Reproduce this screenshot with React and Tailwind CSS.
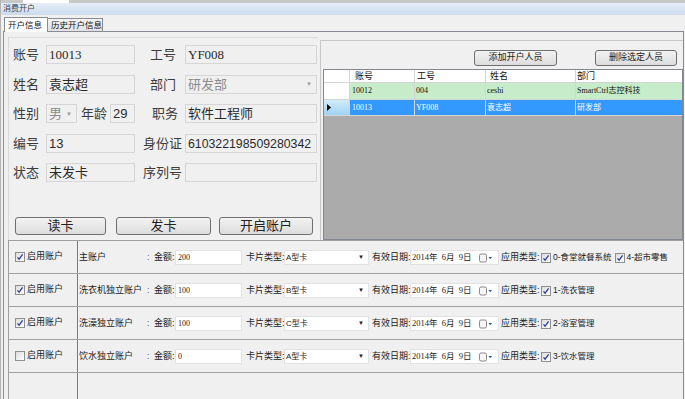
import React from 'react'

const SANS = "font-['Liberation_Sans','Noto_Sans_CJK_SC',sans-serif]"
const SERIF = "font-['Liberation_Serif','Noto_Sans_CJK_SC',serif]"

function Check({ on }) {
  return (
    <span className="w-[10px] h-[10px] shrink-0 border border-[#8e8f8f] bg-gradient-to-br from-[#dcdcdc] to-white flex items-center justify-center">
      {on && (
        <svg width="8" height="8" viewBox="0 0 8 8">
          <path d="M1.5 4.3 L3.1 6.2 L6.6 1.4" fill="none" stroke="#2c3f9a" strokeWidth="1.3" />
        </svg>
      )}
    </span>
  )
}

// 左侧只读输入框
function Box({ className = '', children, arrow, muted }) {
  return (
    <div className={`h-[19px] shrink-0 border border-[#d6d6d6] bg-[#f0f0f0] flex items-center pl-[2px] text-[13px] leading-none overflow-hidden ${muted ? 'text-[#8c8c8c]' : 'text-[#2a2a2a]'} ${className}`}>
      <span className="flex-1 whitespace-nowrap">{children}</span>
      {arrow && <span className="text-[6px] text-[#9a9a9a] pr-[4px]">▼</span>}
    </div>
  )
}

function Label({ className = '', children }) {
  return <span className={`shrink-0 text-[13px] text-[#3c3c3c] whitespace-nowrap ${className}`}>{children}</span>
}

function Btn({ className = '', children }) {
  return (
    <button className={`shrink-0 border border-[#707070] rounded-[3px] bg-gradient-to-b from-[#f3f3f3] to-[#dcdcdc] flex items-center justify-center text-[#222] ${className}`}>
      {children}
    </button>
  )
}

const accounts = [
  { on: true, name: '主账户', amount: '200', card: 'A型卡', apps: ['0-食堂就餐系统', '4-超市零售'] },
  { on: true, name: '洗衣机独立账户', amount: '100', card: 'B型卡', apps: ['1-洗衣管理'] },
  { on: true, name: '洗澡独立账户', amount: '100', card: 'C型卡', apps: ['2-浴室管理'] },
  { on: false, name: '饮水独立账户', amount: '0', card: 'A型卡', apps: ['3-饮水管理'] },
]

function AccountRow({ on, name, amount, card, apps }) {
  return (
    <div className="h-[33px] shrink-0 flex border-b border-[#a0a0a0] text-[9px] text-[#222]">
      <div className="w-[69px] shrink-0 border-r border-[#7a7a7a] flex items-center gap-[2px] pl-[6px]">
        <Check on={on} />
        <span>启用账户</span>
      </div>
      <div className="flex-1 flex items-center h-[15px] mt-[9px]">
        <span className="w-[69px] pl-[1px] whitespace-nowrap">{name}</span>
        <span className="w-[7px] text-[#666]">:</span>
        <span className="w-[21px] whitespace-nowrap">金额:</span>
        <div className="w-[67px] h-[15px] bg-white border border-[#e2e2e2] flex items-center pl-[2px]">
          <span className={`${SERIF} text-[8px]`}>{amount}</span>
        </div>
        <span className="w-[38px] ml-[4px] whitespace-nowrap">卡片类型:</span>
        <div className="w-[85px] h-[15px] bg-white border border-[#e2e2e2] flex items-center pl-[1px]">
          <span className="flex-1 text-[8px]">{card}</span>
          <span className="text-[6px] pr-[4px]">▼</span>
        </div>
        <span className="w-[38px] ml-[3px] whitespace-nowrap">有效日期:</span>
        <div className="w-[89px] h-[15px] bg-white border border-[#e2e2e2] flex items-center pl-[1px]">
          <span className={`flex-1 ${SERIF} text-[8.5px] whitespace-pre`}>2014年  6月  9日</span>
          <svg width="14" height="10" viewBox="0 0 14 10" className="mr-[5px]">
            <rect x="0.5" y="1" width="7" height="8" rx="1.5" fill="#f6f6f6" stroke="#8a8a8a" />
            <path d="M9.5 4 L13 4 L11.25 6.2 Z" fill="#2c5aa0" />
          </svg>
        </div>
        <span className="w-[40px] ml-[2px] whitespace-nowrap">应用类型:</span>
        {apps.map((a) => (
          <span key={a} className="flex items-center gap-[2px] mr-[3px] whitespace-nowrap text-[8.5px]">
            <Check on />
            <span>{a}</span>
          </span>
        ))}
      </div>
    </div>
  )
}

export default function App() {
  return (
    <div className={`w-[685px] h-[399px] overflow-hidden bg-[#f0f0f0] flex flex-col border-l border-[#b4b4b4] ${SANS}`}>
      {/* 上方父窗体残留 */}
      <div className="h-[3px] shrink-0 flex bg-[#c8c8c8]">
        <div className="w-[22px]" />
        <div className="w-[46px] bg-white" />
      </div>
      {/* 标题 */}
      <div className="h-[12px] shrink-0 bg-gradient-to-b from-[#e6eef8] to-[#cddbec] pl-[2px] text-[8px] leading-[12px] text-[#444]">
        消费开户
      </div>
      {/* 页签 */}
      <div className="h-[16px] shrink-0 flex items-end pl-[3px]">
        <div className="w-[44px] h-[15px] bg-white border border-b-0 border-[#898c95] text-[8.5px] text-[#111] flex items-center pl-[3px] -mb-px relative z-10">
          开户信息
        </div>
        <div className="w-[55px] h-[13px] bg-gradient-to-b from-[#f3f3f3] to-[#e2e2e2] border border-b-0 border-l-0 border-[#898c95] text-[8.5px] text-[#111] flex items-center pl-[3px]">
          历史开户信息
        </div>
      </div>
      {/* 页签内容 */}
      <div className="ml-[2px] w-[681px] flex-1 flex flex-col border-t border-l border-r border-[#898c95] bg-[#f0f0f0]">
        <div className="h-[208px] shrink-0 flex pl-[4px]">
          {/* 人员信息 */}
          <div className="w-[310px] mt-[5px] border-l border-t border-[#dadada] pl-[4px] pt-[7px] flex flex-col">
            <div className="flex flex-col gap-[10px]">
              <div className="flex items-center">
                <Label className="w-[33px]">账号</Label>
                <Box className="w-[89px]"><span className={SERIF}>10013</span></Box>
                <Label className="w-[50px] pl-[15px]">工号</Label>
                <Box className="w-[132px]"><span className={SERIF}>YF008</span></Box>
              </div>
              <div className="flex items-center">
                <Label className="w-[33px]">姓名</Label>
                <Box className="w-[89px]">袁志超</Box>
                <Label className="w-[50px] pl-[15px]">部门</Label>
                <Box className="w-[132px]" muted arrow>研发部</Box>
              </div>
              <div className="flex items-center">
                <Label className="w-[33px]">性别</Label>
                <Box className="w-[31px]" muted arrow>男</Box>
                <Label className="w-[33px] pl-[4px]">年龄</Label>
                <Box className="w-[25px]">29</Box>
                <Label className="w-[50px] pl-[17px]">职务</Label>
                <Box className="w-[132px]">软件工程师</Box>
              </div>
              <div className="flex items-center">
                <Label className="w-[33px]">编号</Label>
                <Box className="w-[89px]">13</Box>
                <Label className="w-[50px] pl-[8px]">身份证</Label>
                <Box className="w-[132px]"><span className="text-[12.3px]">610322198509280342</span></Box>
              </div>
              <div className="flex items-center">
                <Label className="w-[33px]">状态</Label>
                <Box className="w-[89px]">未发卡</Box>
                <Label className="w-[50px] pl-[8px]">序列号</Label>
                <Box className="w-[132px]" />
              </div>
            </div>
            <div className="flex mt-[34px] ml-[2px] text-[13px]">
              <Btn className="w-[91px] h-[18px]">读卡</Btn>
              <Btn className="w-[95px] h-[18px] ml-[10px]">发卡</Btn>
              <Btn className="w-[94px] h-[18px] ml-[8px]">开启账户</Btn>
            </div>
          </div>
          {/* 开户人员列表 */}
          <div className="w-[363px] ml-[2px] mt-[8px] border-l border-t border-[#c8c8c8] flex flex-col">
            <div className="flex justify-end gap-[38px] pr-[6px] pt-[9px] text-[9px]">
              <Btn className="w-[83px] h-[16px]">添加开户人员</Btn>
              <Btn className="w-[82px] h-[16px]">删除选定人员</Btn>
            </div>
            <div className="mt-[3px] ml-[2px] flex-1 bg-[#ababab] border border-[#828790] flex flex-col text-[#111]">
              <div className="h-[13px] flex bg-white border-b border-[#d4d4d4] text-[9px] leading-[12px]">
                <div className="w-[26px] border-r border-[#d4d4d4]" />
                <div className="w-[65px] pl-[5px] border-r border-[#d4d4d4]">账号</div>
                <div className="w-[71px] pl-[2px] border-r border-[#d4d4d4]">工号</div>
                <div className="w-[90px] pl-[4px] border-r border-[#d4d4d4]">姓名</div>
                <div className="flex-1 pl-[1px]">部门</div>
              </div>
              <div className={`h-[17px] flex border-b border-[#d4d4d4] text-[8px] leading-[16px] ${SERIF}`}>
                <div className="w-[26px] bg-white border-r border-[#d4d4d4]" />
                <div className="w-[65px] pl-[2px] bg-[#c6ecc9] border-r border-[#d4d4d4]">10012</div>
                <div className="w-[71px] pl-[1px] bg-[#c6ecc9] border-r border-[#d4d4d4]">004</div>
                <div className="w-[90px] pl-[1px] bg-[#c6ecc9] border-r border-[#d4d4d4]">ceshi</div>
                <div className="flex-1 pl-[1px] bg-[#c6ecc9]">SmartCtrl志控科技</div>
              </div>
              <div className={`h-[16px] flex border-b border-[#d4d4d4] text-[8px] leading-[15px] text-white ${SERIF}`}>
                <div className="w-[26px] bg-gradient-to-b from-[#d3ecfb] to-[#9fd2f2] border-r border-[#d4d4d4] flex items-center pl-[3px]">
                  <svg width="4" height="7" viewBox="0 0 4 7"><path d="M0 0 L4 3.5 L0 7 Z" fill="#000" /></svg>
                </div>
                <div className="w-[65px] pl-[2px] bg-[#3399ff] border-r border-[#d4d4d4]">10013</div>
                <div className="w-[71px] pl-[1px] bg-[#3399ff] border-r border-[#d4d4d4]">YF008</div>
                <div className="w-[90px] pl-[1px] bg-[#3399ff] border-r border-[#d4d4d4]">袁志超</div>
                <div className="flex-1 pl-[1px] bg-[#3399ff]">研发部</div>
              </div>
            </div>
          </div>
        </div>
        {/* 账户设置 */}
        <div className="ml-[4px] flex-1 flex flex-col border-t border-l border-[#a0a0a0]">
          {accounts.map((a) => (
            <AccountRow key={a.name} {...a} />
          ))}
          <div className="flex-1 flex">
            <div className="w-[69px] border-r border-[#7a7a7a]" />
            <div className="flex-1" />
          </div>
        </div>
      </div>
    </div>
  )
}
